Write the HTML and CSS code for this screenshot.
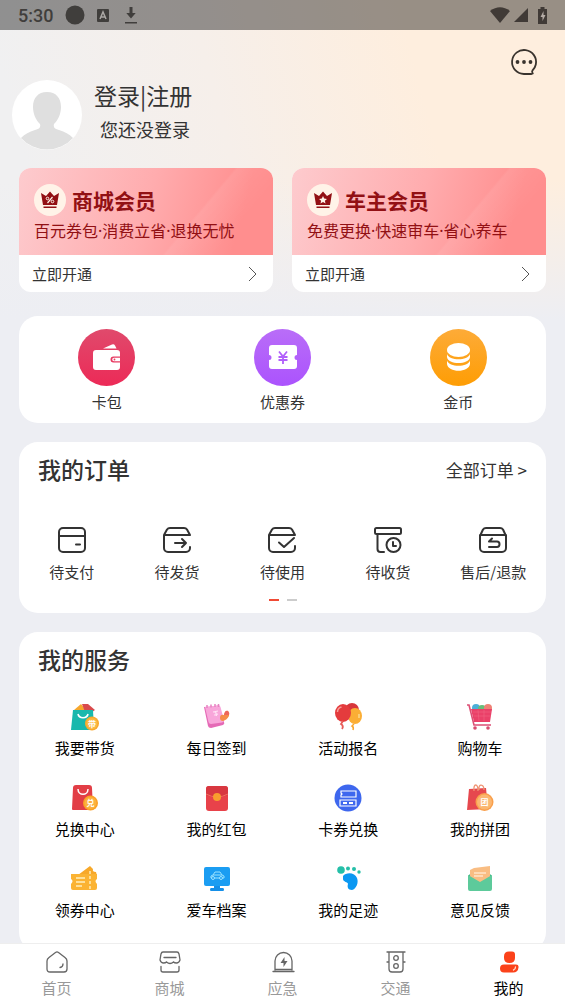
FILE: index.html
```
<!DOCTYPE html>
<html lang="zh-CN">
<head>
    <meta charset="UTF-8">
    <meta name="viewport" content="width=device-width, initial-scale=1.0">
    <title>我的</title>
    <link rel="stylesheet" href="styles.css">
</head>
<body>
<div class="app">
    <!-- 状态栏 -->
    <div class="status-bar">
        <span class="time">5:30</span>
        <svg width="20" height="20" viewBox="0 0 20 20"><circle cx="10" cy="10" r="9.5" fill="#403e3c"/></svg>
        <svg class="status-a" width="12" height="13" viewBox="0 0 12 13"><rect width="12" height="13" rx="1" fill="#403e3c"/><path d="M3 10L6 3l3 7M4 8h4" fill="none" stroke="#aaa7a4" stroke-width="1.5"/></svg>
        <svg class="status-down" width="12" height="17" viewBox="0 0 12 17"><path d="M4.500 0h3v6h3.200L6 11.500 1.300 6h3.200zM0 15h12v1.600H0z" fill="#403e3c"/></svg>
        <div class="status-right">
            <svg width="20" height="16" viewBox="0 0 20 16"><path d="M0 4Q10-3.500 20 4L10 16z" fill="#403a36"/></svg>
            <svg width="14" height="14" viewBox="0 0 14 14"><path d="M14 0v14H0z" fill="#403a36"/></svg>
            <svg class="battery" width="9" height="17" viewBox="0 0 9 17"><path d="M2.500 0h4v2H9v15H0V2h2.500z" fill="#403a36"/><path d="M5.500 4L2.500 10h2v4l3-6h-2z" fill="#b5aca6"/></svg>
        </div>
    </div>

    <main class="content">
        <header class="profile">
            <svg class="avatar" width="70" height="70" viewBox="0 0 70 70">
                <circle cx="35" cy="35" r="35" fill="#fff"/>
                <path d="M35 12c9 0 14 6 14 15 0 7-3 13-7 17-1 4 1 5 5 6 6 2 10 4 14 8A35 35 0 0 1 9 58c4-4 8-6 14-8 4-1 6-2 5-6-4-4-7-10-7-17 0-9 5-15 14-15z" fill="#dfdfdf"/>
            </svg>
            <div class="profile-text">
                <a href="#" class="login">登录|注册</a>
                <p>您还没登录</p>
            </div>
            <button class="message" aria-label="消息">
                <svg width="28" height="28" viewBox="0 0 28 28"><path d="M21.500 26H14A12 12 0 1 1 25.800 16.500C25.200 19.500 24 20.500 22.500 22.300c-.8 1-.5 2 .3 3.200z" fill="none" stroke="#39332e" stroke-width="1.800" stroke-linejoin="round"/><g fill="#39332e"><circle cx="7.500" cy="14" r="1.900"/><circle cx="14" cy="14" r="1.900"/><circle cx="20.500" cy="14" r="1.900"/></g></svg>
            </button>
        </header>

        <!-- 会员卡片 -->
        <section class="members">
            <a href="#" class="member">
                <div class="member-top">
                    <h2>
                        <svg width="32" height="32" viewBox="0 0 32 32"><circle cx="16" cy="16" r="16" fill="#fff3e8"/><path d="M7 9l5 3 4-4.500L20 12l5-3-2 12H9zM9.500 22.500h13V24h-13z" fill="#921014"/><path d="M13.500 19l5-6" stroke="#fff3e8" stroke-width="1.200"/><circle cx="13.500" cy="14.500" r="1.300" fill="none" stroke="#fff3e8"/><circle cx="18.500" cy="17.500" r="1.300" fill="none" stroke="#fff3e8"/></svg>
                        商城会员
                    </h2>
                    <p>百元券包·消费立省·退换无忧</p>
                </div>
                <div class="member-open">立即开通
                    <svg width="10" height="16" viewBox="0 0 10 16"><path d="M1 1l7 7-7 7" fill="none" stroke="#555" stroke-width="1"/></svg>
                </div>
            </a>
            <a href="#" class="member">
                <div class="member-top">
                    <h2>
                        <svg width="32" height="32" viewBox="0 0 32 32"><circle cx="16" cy="16" r="16" fill="#fff3e8"/><path d="M7 9l5 3 4-4.500L20 12l5-3-2 12H9zM9.500 22.500h13V24h-13z" fill="#921014"/><path d="M16 12l1.200 2.600 2.800.3-2.100 1.900.6 2.700-2.500-1.400-2.500 1.400.6-2.700-2.100-1.900 2.800-.3z" fill="#fff3e8"/></svg>
                        车主会员
                    </h2>
                    <p>免费更换·快速审车·省心养车</p>
                </div>
                <div class="member-open">立即开通
                    <svg width="10" height="16" viewBox="0 0 10 16"><path d="M1 1l7 7-7 7" fill="none" stroke="#555" stroke-width="1"/></svg>
                </div>
            </a>
        </section>

        <!-- 钱包 -->
        <section class="panel wallet">
            <a href="#" class="item">
                <svg width="57" height="57" viewBox="0 0 57 57">
                    <defs><linearGradient id="gRed" x2="0" y2="1"><stop stop-color="#e04a6c"/><stop offset="1" stop-color="#ec2a57"/></linearGradient></defs>
                    <circle cx="28.500" cy="28.500" r="28.500" fill="url(#gRed)"/>
                    <path d="M25 19.500l9-4q2-.8 3 1l1.500 3z" fill="#fff"/>
                    <path d="M18 21h21a3 3 0 0 1 3 3v3.500h-6.500a3 3 0 0 0 0 6H42V38a3 3 0 0 1-3 3H18a3 3 0 0 1-3-3V24a3 3 0 0 1 3-3z" fill="#fff"/>
                    <path d="M36 28.700h6v3.600h-6a1.800 1.800 0 0 1 0-3.600z" fill="#fff"/><circle cx="36.500" cy="30.500" r=".9" fill="#e93b62"/>
                </svg>
                <span>卡包</span>
            </a>
            <a href="#" class="item">
                <svg width="57" height="57" viewBox="0 0 57 57">
                    <defs><linearGradient id="gPurple" x2="0" y2="1"><stop stop-color="#b96df8"/><stop offset="1" stop-color="#ab53fd"/></linearGradient></defs>
                    <circle cx="28.500" cy="28.500" r="28.500" fill="url(#gPurple)"/>
                    <path d="M18 16h22a3 3 0 0 1 3 3v7a2.500 2.500 0 0 0 0 5v6a3 3 0 0 1-3 3H18a3 3 0 0 1-3-3v-6a2.500 2.500 0 0 0 0-5v-7a3 3 0 0 1 3-3z" fill="#fff"/>
                    <path d="M25 22.500l4 5 4-5M24.500 28h9M24.500 31h9M29 27.500V35" fill="none" stroke="#b15ffb" stroke-width="1.800"/>
                </svg>
                <span>优惠券</span>
            </a>
            <a href="#" class="item">
                <svg width="57" height="57" viewBox="0 0 57 57">
                    <defs><linearGradient id="gGold" x2="0" y2="1"><stop stop-color="#fdab38"/><stop offset="1" stop-color="#fe9d04"/></linearGradient></defs>
                    <circle cx="28.500" cy="28.500" r="28.500" fill="url(#gGold)"/>
                    <ellipse cx="28.500" cy="21" rx="11.500" ry="7" fill="#fff"/>
                    <path d="M17 25c2 7 21 7 23 0v3c-1 8-22 8-23 0zM17 31.500c2 7 21 7 23 0V35c-1 9-22 9-23 0z" fill="#fff"/>
                </svg>
                <span>金币</span>
            </a>
        </section>

        <!-- 订单 -->
        <section class="panel orders">
            <div class="panel-head">
                <h2>我的订单</h2>
                <a href="#">全部订单 &gt;</a>
            </div>
            <div class="order-list">
                <a href="#" class="item">
                    <svg class="line" width="30" height="28" viewBox="0 0 30 28"><rect x="2" y="2" width="26" height="24" rx="4"/><path d="M2 10h26M19 18.500h4"/></svg>
                    <span>待支付</span>
                </a>
                <a href="#" class="item">
                    <svg class="line" width="30" height="28" viewBox="0 0 30 28"><path d="M2 9l3-5.500Q6 2 8 2h14q2 0 3 1.500L28 9H2v13a4 4 0 0 0 4 4h18a4 4 0 0 0 4-4v-1M13 17h11M20 13l4 4-4 4"/></svg>
                    <span>待发货</span>
                </a>
                <a href="#" class="item">
                    <svg class="line" width="30" height="28" viewBox="0 0 30 28"><path d="M28 9H2l3-5.500Q6 2 8 2h14q2 0 3 1.500L28 9M2 9v13a4 4 0 0 0 4 4h18a4 4 0 0 0 4-4v-2M12 16.500l5 4.500 10-9"/></svg>
                    <span>待使用</span>
                </a>
                <a href="#" class="item">
                    <svg class="line" width="30" height="28" viewBox="0 0 30 28"><rect x="2" y="2" width="26" height="6" rx="1.500"/><path d="M4.500 8v15a3 3 0 0 0 3 3H11M20 16v4h3"/><circle cx="20.500" cy="19" r="7"/></svg>
                    <span>待收货</span>
                </a>
                <a href="#" class="item">
                    <svg class="line" width="30" height="28" viewBox="0 0 30 28"><path d="M2 10l3-6.500Q6 2 8 2h14q2 0 3 1.500L28 10M2 9h26v13a4 4 0 0 1-4 4H6a4 4 0 0 1-4-4zM14 12.500L11 15.500h8q2.500 0 2.500 2.700T19 21h-8"/></svg>
                    <span>售后/退款</span>
                </a>
            </div>
            <div class="dots"><i class="on"></i><i></i></div>
        </section>

        <!-- 服务 -->
        <section class="panel services">
            <h2>我的服务</h2>
            <div class="service-list">
                <a href="#" class="item">
                    <svg width="30" height="30" viewBox="0 0 30 30"><path d="M4 8l7-6 5 6z" fill="#f6a72d"/><path d="M12 2h6l7 6-3 2H15z" fill="#d94a4c"/><path d="M3 8h20l1 20H1z" fill="#19b8ad"/><path d="M8 12c1 5 9 5 10 0" fill="none" stroke="#fff" stroke-width="1.600"/><circle cx="22" cy="21.500" r="7" fill="#f9a92d"/><circle cx="22" cy="21.500" r="5.500" fill="#fbb944"/><text x="22" y="24.500" class="mark">带</text></svg>
                    <span>我要带货</span>
                </a>
                <a href="#" class="item">
                    <svg width="30" height="30" viewBox="0 0 30 30"><path d="M2 5l4 19q.5 2 3 2l12-3q2-1 1-3L17 4z" fill="#e56ab6"/><path d="M3 5q6 0 13-2 2 0 2.500 2L22 18q0 2-2 2.500L9 22q-2 0-2.500-2z" fill="#f8a6da"/><path d="M5 3v3M9 2.500v3M13 2v3M16.500 2v3" stroke="#e783c2" stroke-width="1.500"/><path d="M11 10l5-1M12 13l4-1M13.500 9l1 5" stroke="#ffe4f5" stroke-width="1.200"/><path d="M18 16q0-4 4-3 1-5 4-4 2 2 1 5-2 4-6 5-3 0-3-3z" fill="#f58c49"/><path d="M22 13q1-5 4-4 2 2 1 4z" fill="#ee655a"/></svg>
                    <span>每日签到</span>
                </a>
                <a href="#" class="item">
                    <svg width="30" height="30" viewBox="0 0 30 30"><circle cx="19" cy="8" r="7" fill="#d7363b"/><ellipse cx="22" cy="14" rx="7" ry="8" fill="#fbae35"/><path d="M21 22l-2 2q2 1 1 4" fill="none" stroke="#f9a62d" stroke-width="1.500"/><ellipse cx="10" cy="11" rx="8" ry="9" fill="#e43b3d"/><path d="M10 19l-2 3q3 2 1 5" fill="none" stroke="#e85b58" stroke-width="1.800"/><path d="M4.500 10q0-4 4-5" fill="none" stroke="#f79b96" stroke-width="1.500"/><path d="M26 12v4" stroke="#fdd98f" stroke-width="1.500"/></svg>
                    <span>活动报名</span>
                </a>
                <a href="#" class="item">
                    <svg width="30" height="30" viewBox="0 0 30 30"><circle cx="11" cy="6" r="4" fill="#4bafd7"/><circle cx="17" cy="7" r="4" fill="#67bd79"/><circle cx="23" cy="6" r="4" fill="#ee8275"/><path d="M6 7h21l-2 13H9z" fill="#ea4169"/><path d="M8 10h18M9 14h17M13 8l1 11M19 8v11" stroke="#f06a86" stroke-width=".5"/><path d="M2 3h2l5 20h17" fill="none" stroke="#dc4f75" stroke-width="1.600"/><circle cx="10" cy="26" r="1.800" fill="#d84c71"/><circle cx="23" cy="26" r="1.800" fill="#d84c71"/></svg>
                    <span>购物车</span>
                </a>
                <a href="#" class="item">
                    <svg width="30" height="30" viewBox="0 0 30 30"><path d="M6 2h13q3 0 3 3l1 21q0 1-1 1H3q-1 0-1-1L3 5q0-3 3-3z" fill="#e23e46"/><path d="M8 6c0 7 10 7 10 0" fill="none" stroke="#fff" stroke-width="1.500"/><circle cx="20.500" cy="20" r="7.500" fill="#fba126"/><circle cx="20.500" cy="20" r="6" fill="#fcb13e"/><text x="20.500" y="23" class="mark">兑</text></svg>
                    <span>兑换中心</span>
                </a>
                <a href="#" class="item">
                    <svg width="30" height="30" viewBox="0 0 30 30"><rect x="4" y="3" width="22" height="25" rx="3" fill="#e8424a"/><path d="M4 6q0-3 3-3h16q3 0 3 3v6q-11 5-22 0z" fill="#d83740"/><path d="M4 11q11 6 22 0" fill="none" stroke="#f16f61"/><circle cx="15" cy="14" r="4" fill="#f99d2e"/></svg>
                    <span>我的红包</span>
                </a>
                <a href="#" class="item">
                    <svg width="30" height="30" viewBox="0 0 30 30"><circle cx="15" cy="15" r="13.500" fill="#3e67ee"/><g fill="none" stroke="#fff" stroke-width="1.200"><path d="M8 8h15v6H8v-2l1-1-1-1zM7 17h16v6H7z"/></g><path d="M10 20h4M16 20h4" stroke="#fff" stroke-width="2"/></svg>
                    <span>卡券兑换</span>
                </a>
                <a href="#" class="item">
                    <svg width="30" height="30" viewBox="0 0 30 30"><path d="M4 6l17-1 2 21-21 1z" fill="#e6484e"/><path d="M9 8c-1-8 4-8 4 0M14 7c-1-7 5-6 5 0" fill="none" stroke="#ef9574" stroke-width="1.300"/><circle cx="19.500" cy="19" r="9" fill="#f99f4b"/><circle cx="19.500" cy="19" r="7.500" fill="#fbb771"/><text x="19.500" y="22" class="mark">团</text></svg>
                    <span>我的拼团</span>
                </a>
                <a href="#" class="item">
                    <svg width="30" height="30" viewBox="0 0 30 30"><path d="M8 11L20 2l3 3q-1 3 3 3l1 4-4 8z" fill="#f7a829"/><path d="M1 10h26v5q-3 2 0 5v4q0 2-2 2H3q-2 0-2-2v-4q3-3 0-5z" fill="#fbb333"/><path d="M6 14h9M6 18h9M6 22h6" stroke="#fff0bd" stroke-width="1.400"/><path d="M20 7v18" stroke="#fff0bd" stroke-width="1.400" stroke-dasharray="3 2"/></svg>
                    <span>领券中心</span>
                </a>
                <a href="#" class="item">
                    <svg width="30" height="30" viewBox="0 0 30 30"><path d="M12 20h6v4h3q1 0 1 1.500T21 27H9q-1 0-1-1.500T9 24h3z" fill="#158fe8"/><rect x="2" y="3" width="26" height="19" rx="2" fill="#1b9df2"/><path d="M9 14v-2l2-1 2-3h5l2 3 2 1v2zM11 11h9" fill="none" stroke="#9be3ff"/><circle cx="11" cy="14" r="1.500" fill="#1b9df2" stroke="#9be3ff"/><circle cx="19" cy="14" r="1.500" fill="#1b9df2" stroke="#9be3ff"/></svg>
                    <span>爱车档案</span>
                </a>
                <a href="#" class="item">
                    <svg width="30" height="30" viewBox="0 0 30 30"><g fill="#25bfa8"><circle cx="8" cy="6" r="3.800"/><circle cx="15" cy="4.500" r="2"/><circle cx="21" cy="5" r="2"/><circle cx="26" cy="8" r="1.700"/></g><path d="M10 12c3-4 12-4 14 2 2 5-1 11-5 12-4 0-5-3-4-6 0-2-5-2-5-5z" fill="#0b98f2"/></svg>
                    <span>我的足迹</span>
                </a>
                <a href="#" class="item">
                    <svg width="30" height="30" viewBox="0 0 30 30"><path d="M3 12l4-4h16l4 4v12H3z" fill="#43b889"/><path d="M5 6l4-2 16-2v18H5z" fill="#f9bd83"/><path d="M9 9h12M9 12h9" stroke="#ffe5ca" stroke-width="1.300"/><path d="M3 11l12 7 12-7v14q0 2-2 2H5q-2 0-2-2z" fill="#5dca9b"/></svg>
                    <span>意见反馈</span>
                </a>
            </div>
        </section>
    </main>

    <!-- 底部导航 -->
    <nav class="tabbar">
        <a href="#">
            <svg width="24" height="24" viewBox="0 0 24 24"><path d="M10.500 2.500Q12 1.300 13.500 2.500L20 7.500q2 1.500 2 3.500v8q0 3-3 3H5q-3 0-3-3v-8q0-2 2-3.500zM18 14q0 3-3 3.500"/></svg>
            首页
        </a>
        <a href="#">
            <svg width="24" height="24" viewBox="0 0 24 24"><path d="M5 2h14q1.500 0 2 2l1 6q-1 3-3.500 3-2 0-3-1-3.500 3-7 0-1 1-3 1-2.500 0-3.500-3l1-6q.5-2 2-2zM6 7.500h12M3 16.500V20q0 2 2 2h14q2 0 2-2v-3.500"/></svg>
            商城
        </a>
        <a href="#">
            <svg width="24" height="24" viewBox="0 0 24 24"><path d="M4 20v-9a8.500 8.500 0 0 1 17 0v9M2 21.500h21M4 19.500h17"/><path d="M13.500 7L9.500 13h3v4l4-6h-3z" fill="#666" stroke="none"/></svg>
            应急
        </a>
        <a href="#">
            <svg width="24" height="24" viewBox="0 0 24 24"><path d="M3 2h18M5 2v17q0 3 3 3h8q3 0 3-3V2M3 12h2M19 12h2"/><circle cx="12" cy="8" r="2.300"/><circle cx="12" cy="16" r="2.300"/></svg>
            交通
        </a>
        <a href="#" class="active">
            <svg width="24" height="24" viewBox="0 0 24 24"><path d="M12 1.500h3q3 0 3 3V8q0 5-5.500 5T7 8V6.500q0-5 5-5zM7 14.500h12q3 0 2.500 3-.5 5-5.500 5H7q-4 0-4-4t4-4z" fill="#fb421a" stroke="none"/><path d="M18.500 17q0 2.500-2 3" stroke="#ffd9c9"/></svg>
            我的
        </a>
    </nav>
</div>
</body>
</html>
```
FILE: styles.css
```
* {
    box-sizing: border-box;
}
body {
    font-family: "Noto Sans CJK SC", sans-serif;
    color: #333;
    margin: 0;
    background-color: #edeef3;
}
a {
    color: inherit;
    text-decoration: none;
}
h2, p {
    margin: 0;
}
svg {
    display: block;
    flex-shrink: 0;
}
.app {
    display: flex;
    flex-direction: column;
    height: 100vh;
    background: linear-gradient(to bottom, rgba(237, 238, 243, 0) 180px, #edeef3 320px),
                linear-gradient(75deg, #f0f0f1 30%, #f6efea 55%, #feeede 80%);
}
/* 状态栏 */
.status-bar {
    display: flex;
    align-items: center;
    flex-shrink: 0;
    height: 30px;
    padding: 0 18px;
    background-color: rgba(0, 0, 0, 0.4);
}
.time {
    font-family: Roboto, sans-serif;
    font-size: 18px;
    font-weight: 500;
    width: 47px;
    color: #403e3c;
}
.status-a {
    margin-left: 12px;
}
.status-down {
    margin-left: 16px;
}
.status-right {
    display: flex;
    align-items: center;
    gap: 4px;
    margin-left: auto;
}
.battery {
    margin-left: 6px;
}
.content {
    flex: 1;
    min-height: 0;
    overflow-y: auto;
    scrollbar-width: none;
    padding: 0 19px;
}
/* 用户信息 */
.profile {
    display: flex;
    align-items: flex-start;
    height: 138px;
    margin-left: -7px;
}
.avatar {
    margin-top: 50px;
}
.profile-text {
    flex: 1;
    padding: 48px 0 0 12px;
}
.login {
    display: block;
    font-size: 23px;
    line-height: 34px;
}
.profile-text p {
    padding-left: 6px;
    font-size: 18px;
    line-height: 34px;
}
.message {
    margin: 18px 8px 0 0;
    padding: 0;
    border: none;
    background: none;
    cursor: pointer;
}
/* 会员卡片 */
.members {
    display: grid;
    grid-template-columns: 1fr 1fr;
    gap: 19px;
    margin-bottom: 24px;
}
.member {
    border-radius: 12px;
    overflow: hidden;
    background-color: #fff;
}
.member-top {
    height: 87px;
    padding: 15px 15px 0;
    color: #921014;
    background: linear-gradient(130deg, transparent 66%, rgba(255, 255, 255, 0.07) 67%, transparent 82%),
                linear-gradient(105deg, #fdcbce, #ffacae 50%, #ff8e8e 85%);
}
.member-top h2 {
    display: flex;
    align-items: center;
    gap: 6px;
    font-size: 21px;
    font-weight: 700;
    line-height: 34px;
}
.member-top p {
    font-family: "Noto Sans", "Noto Sans CJK SC", sans-serif;
    font-size: 16px;
    line-height: 28px;
    white-space: nowrap;
}
.member-open {
    display: flex;
    align-items: center;
    justify-content: space-between;
    height: 37px;
    padding: 0 15px 0 13px;
    font-size: 15px;
}
.panel {
    margin-bottom: 19px;
    border-radius: 19px;
    background-color: #fff;
}
.panel h2 {
    font-size: 23px;
    font-weight: 500;
    line-height: 34px;
}
.item {
    display: flex;
    flex-direction: column;
    align-items: center;
    font-size: 15px;
    line-height: 22px;
    white-space: nowrap;
}
.wallet {
    display: grid;
    grid-template-columns: repeat(3, 1fr);
    padding: 13px 0 10px;
}
.wallet .item {
    gap: 5px;
}
/* 订单 */
.orders {
    padding: 10px 0 11px;
}
.panel-head {
    display: flex;
    align-items: center;
    justify-content: space-between;
    padding: 0 19px;
    font-size: 17px;
}
.order-list {
    display: grid;
    grid-template-columns: repeat(5, 1fr);
    padding: 40px 0 16px;
}
.order-list .item {
    gap: 7px;
}
.line {
    fill: none;
    stroke: #333;
    stroke-width: 2;
    stroke-linecap: round;
    stroke-linejoin: round;
}
.dots {
    display: flex;
    justify-content: center;
    gap: 8px;
    padding-bottom: 1px;
}
.dots i {
    width: 10px;
    height: 2px;
    background-color: #ccc;
}
.dots .on {
    background-color: #f04a35;
}
/* 服务 */
.services {
    padding: 10px 0 30px;
    color: #000;
}
.services h2 {
    padding-left: 19px;
    color: #333;
}
.service-list {
    display: grid;
    grid-template-columns: repeat(4, 1fr);
    row-gap: 24px;
    padding-top: 26px;
}
.service-list .item {
    gap: 5px;
}
.mark {
    font-size: 8px;
    font-weight: bold;
    text-anchor: middle;
    fill: #fff;
}
/* 底部导航 */
.tabbar {
    display: grid;
    grid-template-columns: repeat(5, 1fr);
    flex-shrink: 0;
    height: 61px;
    padding-top: 6px;
    border-top: 1px solid #eee;
    background-color: #fff;
}
.tabbar a {
    display: flex;
    flex-direction: column;
    align-items: center;
    gap: 3px;
    font-size: 15px;
    line-height: 22px;
    color: #999;
}
.tabbar svg {
    fill: none;
    stroke: #666;
    stroke-width: 1.3px;
    stroke-linecap: round;
}
.tabbar .active {
    color: #000;
}
```
